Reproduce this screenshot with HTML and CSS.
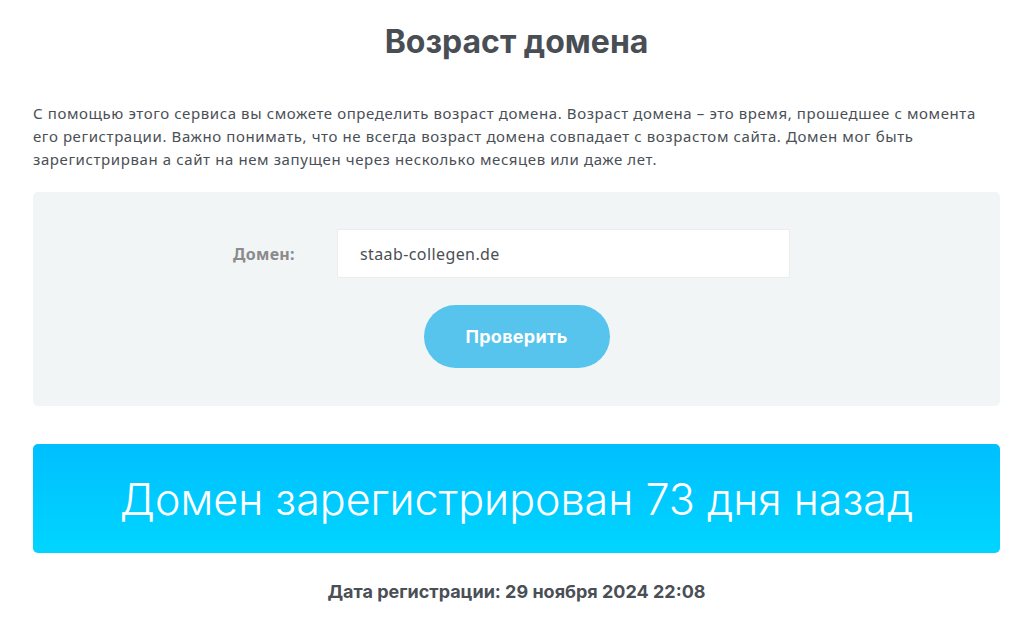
FILE: index.html
```html
<!DOCTYPE html>
<html lang="ru">
<head>
    <meta charset="UTF-8">
    <title>Возраст домена</title>
    <link rel="stylesheet" href="styles.css">
</head>
<body>
    <div class="page">
        <h1 class="title">Возраст домена</h1>
        <p class="intro">С помощью этого сервиса вы сможете определить возраст домена. Возраст домена – это время, прошедшее с момента его регистрации. Важно понимать, что не всегда возраст домена совпадает с возрастом сайта. Домен мог быть зарегистрирван а сайт на нем запущен через несколько месяцев или даже лет.</p>

        <form class="check-form">
            <div class="form-row">
                <label class="form-label" for="domain">Домен:</label>
                <input class="form-input" id="domain" type="text" value="staab-collegen.de">
            </div>
            <button class="form-btn" type="button">Проверить</button>
        </form>

        <div class="result">Домен зарегистрирован 73 дня назад</div>
        <p class="reg-date">Дата регистрации: 29 ноября 2024 22:08</p>
    </div>
</body>
</html>
```

FILE: styles.css
```css
*{ padding: 0; margin: 0; box-sizing: border-box; }

body{
    background: #fff;
    color: #4a4f56;
    font-family: "Noto Sans", sans-serif;
}
.page{
    width: 967px;
    margin-left: 33px;
    padding-top: 22px;
}
.title{
    font-family: Inter, sans-serif;
    font-size: 32px;
    font-weight: 700;
    text-align: center;
    color: #494e55;
    line-height: 40px;
}
.intro{
    margin-top: 40px;
    font-size: 15px;
    letter-spacing: 0.6px;
    line-height: 23px;
}
.check-form{
    margin-top: 21px;
    background: #f2f5f6;
    border-radius: 5px;
    padding: 37px 0 38px;
    display: flex;
    flex-direction: column;
    align-items: center;
}
.form-row{
    display: flex;
    align-items: center;
    margin-right: 10px;
}
.form-label{
    width: 104px;
    font-size: 16px;
    letter-spacing: 0.3px;
    font-weight: 700;
    color: #8b8b8b;
}
.form-input{
    width: 453px;
    height: 49px;
    border: 1px solid #ececec;
    border-radius: 2px;
    background: #fff;
    padding: 0 22px;
    font-family: "Noto Sans", sans-serif;
    font-size: 16px;
    letter-spacing: 0.4px;
    color: #4a4f56;
    outline: none;
}
.form-btn{
    margin-top: 27px;
    width: 186px;
    height: 63px;
    border: 0;
    border-radius: 32px;
    background: #56c4ec;
    color: #fff;
    font-family: Inter, sans-serif;
    font-size: 18px;
    letter-spacing: 0.3px;
    font-weight: 700;
    cursor: pointer;
}
.result{
    margin-top: 38px;
    height: 109px;
    border-radius: 5px;
    background: linear-gradient(#00bfff, #00d5ff);
    color: #fff;
    font-family: Inter, sans-serif;
    font-size: 43px;
    font-weight: 300;
    display: flex;
    align-items: center;
    justify-content: center;
}
.reg-date{
    margin-top: 28px;
    text-align: center;
    font-family: Inter, sans-serif;
    font-size: 18px;
    font-weight: 700;
    line-height: 22px;
}
```
